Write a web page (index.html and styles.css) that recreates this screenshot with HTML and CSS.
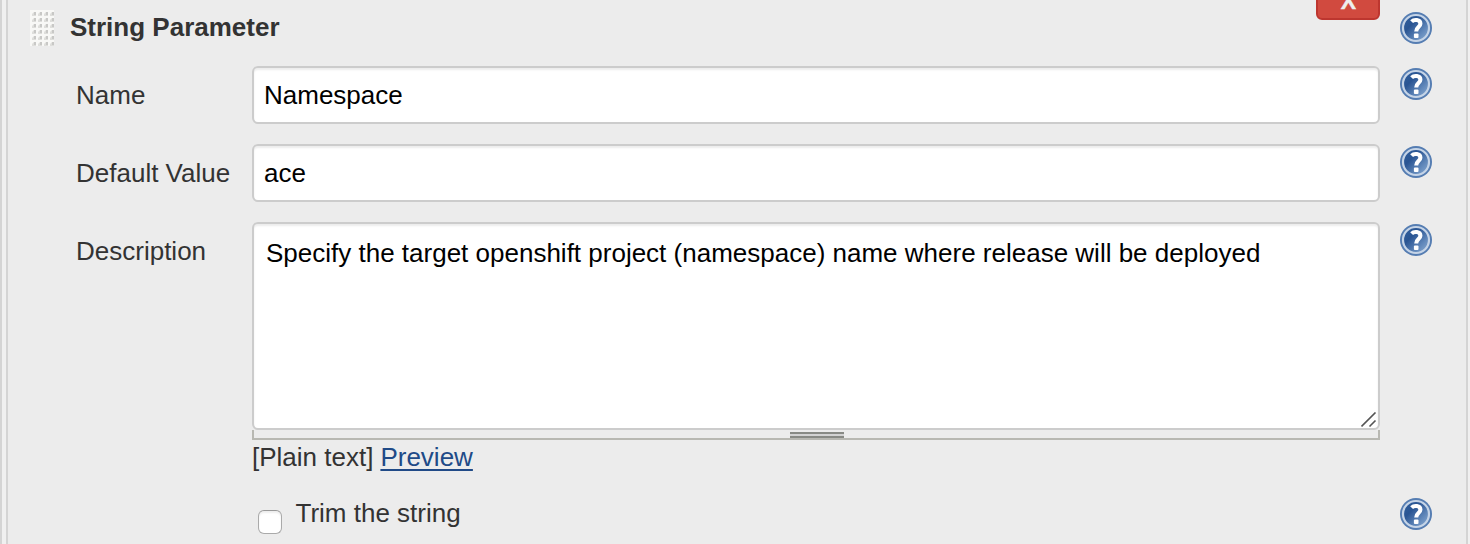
FILE: index.html
```html
<!DOCTYPE html>
<html lang="en">
<head>
<meta charset="utf-8">
<title>String Parameter</title>
<link rel="stylesheet" href="styles.css">
</head>
<body>
<svg width="0" height="0" class="defs" aria-hidden="true">
  <defs>
    <linearGradient id="ball" x1="0" y1="0" x2="1" y2="1">
      <stop offset="0" stop-color="#30609d"/><stop offset=".35" stop-color="#2a5593"/><stop offset=".7" stop-color="#6289bb"/><stop offset="1" stop-color="#8fafd5"/>
    </linearGradient>
    <symbol id="help" viewBox="0 0 32 32">
      <circle cx="16" cy="16" r="16" fill="#557db2"/>
      <circle cx="16" cy="16" r="13" fill="url(#ball)" stroke="#c5d4e7" stroke-width="2.2"/>
      <path d="M11.6 9.6C14 7.2 20.4 7.2 20.4 11.8C20.4 15.2 16.2 15 16.2 19.4" fill="none" stroke="#fff" stroke-width="4.1"/>
      <rect x="13.9" y="21.4" width="4.6" height="4.6" rx="1" fill="#fff"/>
    </symbol>
    <pattern id="dots" width="6" height="6" patternUnits="userSpaceOnUse">
      <rect width="6" height="6" fill="#f8f8f6"/>
      <path d="M2 6V4L4 2H6V6Z" fill="#dededb"/><rect x="4" y="2" width="2" height="3" fill="#c8c8c6"/>
    </pattern>
  </defs>
</svg>
<main class="panel">
  <header class="heading">
    <svg class="grip" width="24" height="36"><rect width="24" height="36" fill="url(#dots)"/></svg>
    <h1 class="title">String Parameter</h1>
    <button class="delete" type="button">X</button>
    <svg class="help"><use href="#help"/></svg>
  </header>
  <div class="row">
    <label class="label" for="name">Name</label>
    <input class="field" id="name" value="Namespace">
    <svg class="help"><use href="#help"/></svg>
  </div>
  <div class="row">
    <label class="label" for="default">Default Value</label>
    <input class="field" id="default" value="ace">
    <svg class="help"><use href="#help"/></svg>
  </div>
  <div class="row description">
    <label class="label" for="description">Description</label>
    <div class="editor">
      <div class="area-box">
        <textarea class="area" id="description" spellcheck="false">Specify the target openshift project (namespace) name where release will be deployed</textarea>
        <svg class="corner" width="16" height="16"><path d="M.5 14.5L14.5.5M8.5 14.5L14.5 8.5" stroke="#555" stroke-width="1.6"/></svg>
      </div>
      <div class="handle"><span class="handle-grip"></span></div>
      <div class="format"><span class="plain">[Plain text]</span><a class="preview" href="#">Preview</a></div>
    </div>
    <svg class="help"><use href="#help"/></svg>
  </div>
  <div class="row trim">
    <span></span>
    <label class="check"><input class="box" type="checkbox"><span class="trim-label">Trim the string</span></label>
    <svg class="help"><use href="#help"/></svg>
  </div>
</main>
</body>
</html>
```
FILE: styles.css
```css
* { box-sizing: border-box; }
body {
  margin: 0;
  height: 544px;
  overflow: hidden;
  padding: 0 2px 0 4px;
  border-left: 2px solid #d4d4d4;
  background: #f0f0f0;
  color: #333;
  font: 26px/30px "Liberation Sans", Arial, sans-serif;
}
.defs { position: absolute; }
.panel {
  height: 544px;
  border: solid #d4d4d4;
  border-width: 0 2px;
  background: #ececec;
}
.heading {
  height: 66px;
  display: flex;
  align-items: flex-start;
  padding: 0 34px 0 22px;
}
.grip { margin-top: 10px; }
.title { margin: 12px auto 0 16px; font: bold 26px/30px "Liberation Sans", Arial, sans-serif; }
.delete {
  width: 64px;
  height: 40px;
  margin: -20px 20px 0 0;
  padding: 1px 0 0 1px;
  border: 2px solid #bd362f;
  border-radius: 6px;
  background: #d14a3f;
  color: #eee;
  font: bold 23px/32px "Liberation Sans", Arial, sans-serif;
  -webkit-text-stroke: .4px #eee;
}
.help { width: 32px; height: 32px; display: block; flex: none; margin-top: 2px; }
.heading .help { margin-top: 12px; }
.row {
  display: grid;
  grid-template-columns: 176px 1128px 32px;
  align-items: start;
  padding-left: 68px;
  height: 78px;
}
.row .help { margin-left: 20px; }
.label { margin-top: 14px; white-space: nowrap; }
.field, .area {
  display: block;
  width: 100%;
  margin: 0;
  border: 2px solid #ccc;
  border-radius: 6px;
  background: #fff;
  box-shadow: inset 0 2px 2px rgba(0, 0, 0, .075);
  color: #000;
  font: 26px/30px "Liberation Sans", Arial, sans-serif;
  outline: 0;
}
.field { height: 58px; padding: 0 10px; }
.description { height: 276px; }
.area-box { position: relative; height: 208px; }
.area { height: 208px; padding: 14px 12px; resize: none; overflow: hidden; }
.corner { position: absolute; right: 3px; bottom: 2px; }
.handle {
  height: 10px;
  display: flex;
  justify-content: center;
  padding-left: 2px;
  border: solid #b8b8b2;
  border-width: 0 2px 2px;
}
.handle-grip {
  width: 54px;
  height: 6px;
  margin-top: 2px;
  border: solid #888a85;
  border-width: 2px 0;
  background: #d3d3d3;
}
.format { display: flex; gap: 7px; margin-top: 2px; }
.preview {
  color: #204a87;
  text-decoration-thickness: 2px;
  text-underline-offset: 3px;
  text-decoration-skip-ink: none;
}
.trim { height: 46px; }
.trim .help { margin-top: 0; }
.check { display: flex; align-items: flex-start; }
.box {
  appearance: none;
  width: 24px;
  height: 24px;
  margin: 12px 13.5px 0 6px;
  border: 1.5px solid #aaa;
  border-top-color: #999;
  border-radius: 6px;
  background: #fff;
  box-shadow: inset 0 2px 2px #eee;
}
```
